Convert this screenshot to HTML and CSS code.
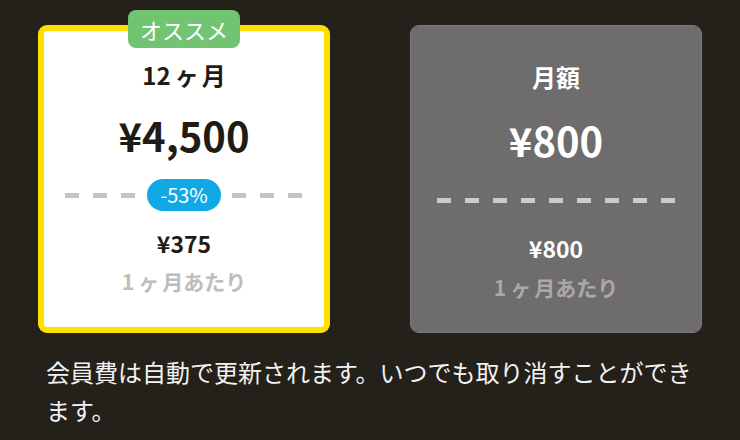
FILE: index.html
```html
<!doctype html>
<html lang="ja">
<head>
	<meta charset="UTF-8">
	<title>プラン</title>
	<link rel="stylesheet" href="styles.css">
</head>
<body>
	<div class="page">
		<div class="plans">
			<div class="plan plan_best">
				<span class="badge">オススメ</span>
				<div class="plan_title">12<span class="ke">ヶ</span>月</div>
				<div class="plan_price">¥4,500</div>
				<div class="divider">
					<span class="dash dash_short"></span>
					<span class="discount">-53%</span>
					<span class="dash dash_short"></span>
				</div>
				<div class="plan_per">¥375</div>
				<div class="plan_unit">1<span class="ke">ヶ</span>月あたり</div>
			</div>
			<div class="plan plan_monthly">
				<div class="plan_title">月額</div>
				<div class="plan_price">¥800</div>
				<div class="divider">
					<span class="dash dash_long"></span>
				</div>
				<div class="plan_per">¥800</div>
				<div class="plan_unit">1<span class="ke">ヶ</span>月あたり</div>
			</div>
		</div>
		<p class="note">会員費は自動で更新されます。いつでも取り消すことができます。</p>
	</div>
</body>
</html>
```

FILE: styles.css
```css
*{
	margin: 0;
	padding: 0;
	box-sizing: border-box;
}
body{
	background: #24201a;
	font-family: "Noto Sans CJK JP", "Noto Sans", sans-serif;
}
.page{
	padding: 25px 38px 0;
}
.plans{
	display: flex;
	gap: 80px;
	align-items: flex-start;
}
.plan{
	position: relative;
	width: 292px;
	height: 308px;
	border-radius: 9px;
	display: flex;
	flex-direction: column;
	align-items: center;
}
.plan_best{
	background: #fff;
	border: 6px solid #ffdf00;
	color: #1f1c15;
	padding-top: 29px;
}
.plan_monthly{
	background: #6e6c6d;
	border: 1px solid #7b797a;
	color: #fff;
	padding-top: 36px;
}
.badge{
	position: absolute;
	top: -21px;
	left: 50%;
	transform: translateX(-50%);
	background: #72c473;
	color: #fff;
	font-size: 22px;
	line-height: 38px;
	padding: 0 12px;
	border-radius: 8px;
	white-space: nowrap;
}
.ke{
	margin: 0 3px 0 4px;
}
.plan_title{
	font-size: 24px;
	font-weight: bold;
	line-height: 30px;
}
.plan_price{
	font-size: 40px;
	font-weight: bold;
	line-height: 50px;
	margin-top: 20px;
}
.plan_monthly .plan_price{
	margin-top: 23px;
}
.divider{
	height: 32px;
	margin-top: 19px;
	display: flex;
	align-items: center;
	justify-content: center;
	gap: 11px;
}
.dash{
	display: block;
	height: 5px;
	background: repeating-linear-gradient(to right, #c3c3c3 0 14px, transparent 14px 28px);
}
.dash_short{
	width: 71px;
}
.dash_long{
	width: 238px;
	background: repeating-linear-gradient(to right, #cbcbcb 0 14px, transparent 14px 28px);
}
.discount{
	background: #10a9e6;
	color: #fff;
	font-size: 20px;
	line-height: 32px;
	padding: 0 13px;
	border-radius: 16px;
}
.plan_per{
	font-size: 23px;
	font-weight: bold;
	line-height: 28px;
	margin-top: 18px;
}
.plan_unit{
	font-size: 21px;
	font-weight: bold;
	line-height: 28px;
	margin-top: 10px;
	color: #bdbdbd;
}
.plan_monthly .plan_unit{
	margin-top: 11px;
	color: #aaa8a9;
}
.note{
	width: 660px;
	margin: 20px 0 0 8px;
	color: #f2f2f2;
	font-size: 24px;
	line-height: 38px;
}
```
